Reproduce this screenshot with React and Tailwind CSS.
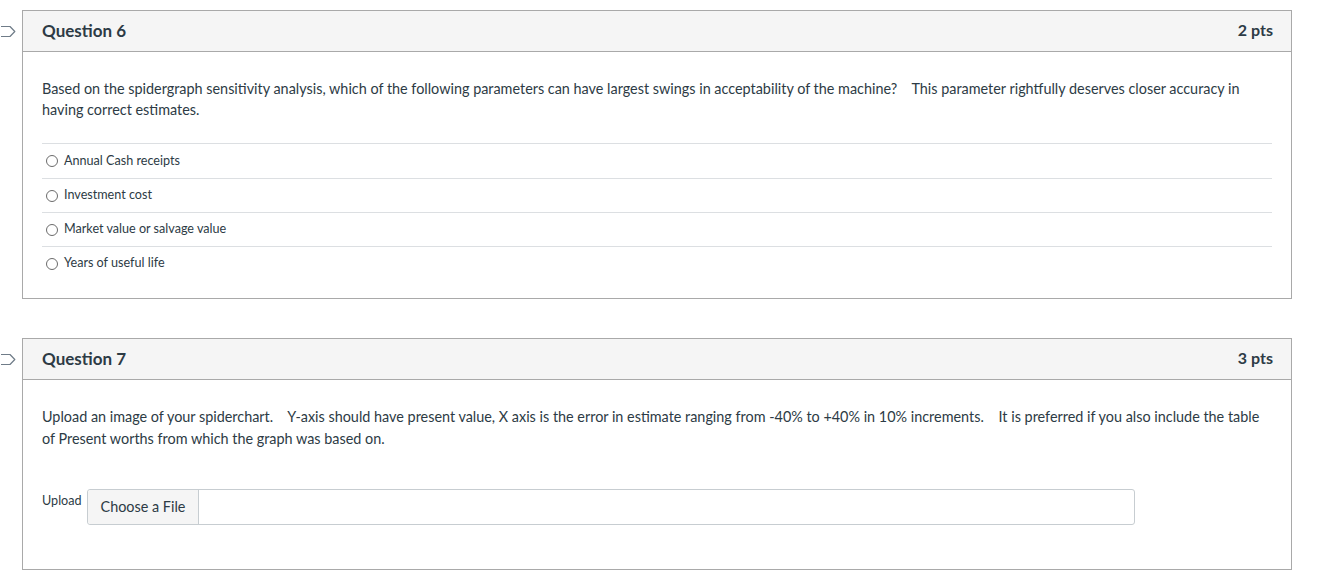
import React from 'react';

const FlagIcon = () => (
  <svg
    className="absolute left-[-22px] top-[14px]"
    width="16"
    height="13"
    viewBox="0 0 16 13"
    fill="none"
  >
    <path
      d="M-8 1.5 H9 L13.8 6.5 L9 11.5 H-8"
      stroke="#6f7c88"
      strokeWidth="1.2"
      strokeLinejoin="round"
    />
  </svg>
);

const Radio = () => (
  <span className="inline-block w-[12px] h-[12px] rounded-full border border-[#6b6b6b] bg-white mr-[6px] shrink-0" />
);

const QuestionCard = ({ title, points, children }) => (
  <div className="relative w-[1270px] border border-[#a9a9a9] bg-white">
    <FlagIcon />
    <div className="flex items-center justify-between h-[41px] bg-[#f5f5f5] border-b border-[#a9a9a9] pl-[19px] pr-[18px]">
      <span className="text-[17px] font-bold text-[#2d3b45] -mt-[1px]">{title}</span>
      <span className="text-[16px] font-bold text-[#2d3b45] -mt-[2px]">{points}</span>
    </div>
    {children}
  </div>
);

const answers = [
  'Annual Cash receipts',
  'Investment cost',
  'Market value or salvage value',
  'Years of useful life',
];

export default function App() {
  const sp = '\u00a0\u00a0\u00a0\u00a0';
  return (
    <div
      className="min-h-[582px] bg-white pl-[22px] pt-[10px] text-[#2d3b45]"
      style={{ fontFamily: 'Lato, "Open Sans", sans-serif' }}
    >
      <QuestionCard title="Question 6" points="2 pts">
        <div className="px-[19px] pt-[26px] pb-[18px]">
          <p className="text-[14.4px] leading-[21px]">
            Based on the spidergraph sensitivity analysis, which of the following parameters can have largest swings in acceptability of the machine?{sp}This parameter rightfully deserves closer accuracy in having correct estimates.
          </p>
          <div className="mt-[23px]">
            {answers.map((a, i) => (
              <div
                key={a}
                className={`flex items-center pl-[4px] border-t border-[#dcdfe2] ${i === 0 ? 'h-[35px]' : 'h-[34px]'}`}
              >
                <Radio />
                <span className="text-[12.6px] text-[#2d3b45]">{a}</span>
              </div>
            ))}
          </div>
        </div>
      </QuestionCard>

      <div className="h-[39px]" />

      <QuestionCard title="Question 7" points="3 pts">
        <div className="px-[19px] pt-[26px] pb-[44px]">
          <p className="text-[14.4px] leading-[22px]">
            Upload an image of your spiderchart.{sp}Y-axis should have present value, X axis is the error in estimate ranging from -40% to +40% in 10% increments.{sp}It is preferred if you also include the table of Present worths from which the graph was based on.
          </p>
          <div className="flex items-start mt-[39px]">
            <span className="text-[12.6px] mt-[3px] mr-[5px]">Upload</span>
            <div className="flex w-[1048px] h-[36px] border border-[#c7cdd1] rounded-[3px]">
              <button className="h-full px-[13px] bg-[#f5f5f5] border-r border-[#c7cdd1] rounded-l-[3px] text-[14.4px] text-[#2d3b45]">
                Choose a File
              </button>
            </div>
          </div>
        </div>
      </QuestionCard>
    </div>
  );
}
